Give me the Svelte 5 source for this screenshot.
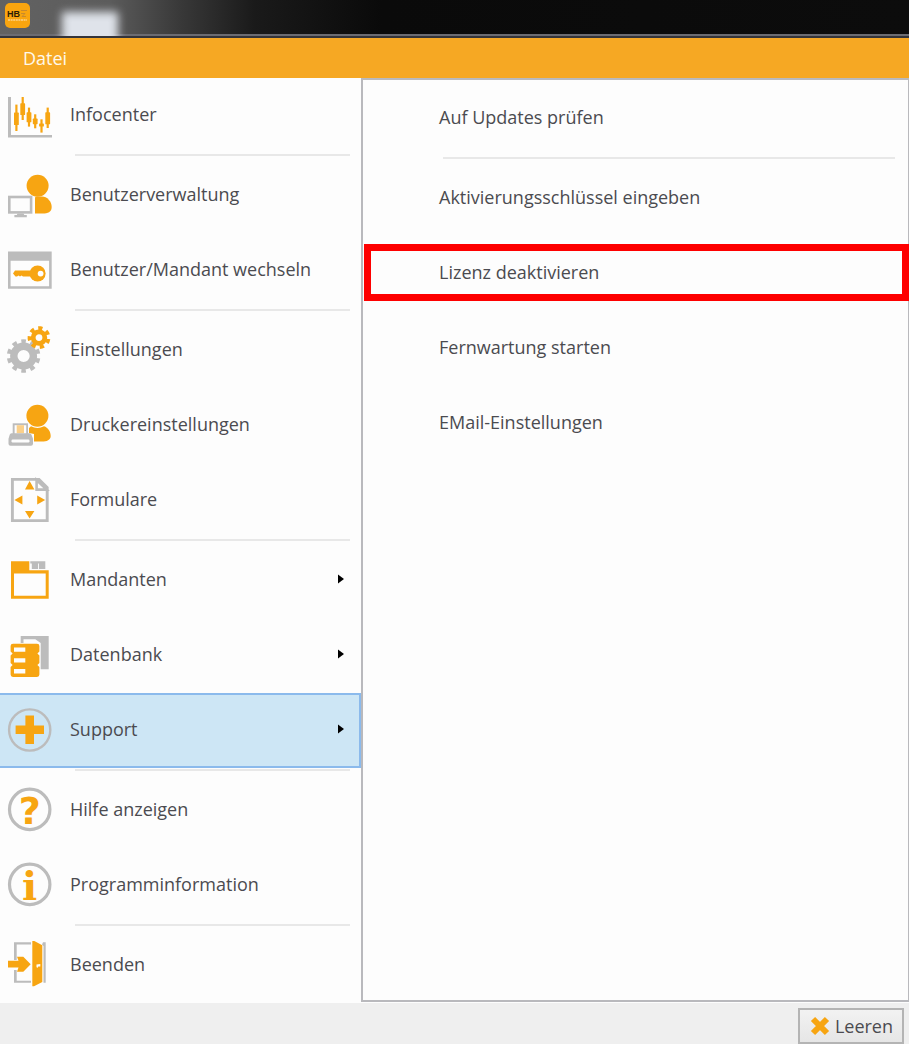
<script>
  const menu = [
    { id: 'infocenter', label: 'Infocenter', line: true },
    { id: 'users', label: 'Benutzerverwaltung' },
    { id: 'switch', label: 'Benutzer/Mandant wechseln', line: true },
    { id: 'settings', label: 'Einstellungen' },
    { id: 'printer', label: 'Druckereinstellungen' },
    { id: 'forms', label: 'Formulare', line: true },
    { id: 'clients', label: 'Mandanten', sub: true },
    { id: 'database', label: 'Datenbank', sub: true },
    { id: 'support', label: 'Support', sub: true, line: true },
    { id: 'help', label: 'Hilfe anzeigen' },
    { id: 'info', label: 'Programminformation', line: true },
    { id: 'exit', label: 'Beenden' }
  ];

  const supportItems = [
    { label: 'Auf Updates prüfen', line: true },
    { label: 'Aktivierungsschlüssel eingeben' },
    { label: 'Lizenz deaktivieren', marked: true },
    { label: 'Fernwartung starten' },
    { label: 'EMail-Einstellungen' }
  ];

  // x, wick top, wick bottom, body top, body bottom
  const candles = [
    [6, 12.6, 39, 20.6, 33],
    [12.3, 5, 28, 11.3, 23],
    [18.6, 15.6, 34.6, 20.3, 30.3],
    [24.8, 22.3, 36.3, 26.6, 32.2],
    [31.1, 27.3, 40.6, 31.4, 34.6],
    [37.3, 15.6, 36, 20.3, 32.3]
  ];

  let active = $state('support');
</script>

{#snippet icon(id)}
  <svg class="icon" viewBox="0 0 44 47" aria-hidden="true">
    {#if id === 'infocenter'}
      <path class="g" d="M0 5h3v38h41v2.6H0z" />
      {#each candles as [x, w1, w2, b1, b2]}
        <rect class="o" x={x + 1.3} y={w1} width="2.2" height={w2 - w1} />
        <rect class="o" {x} y={b1} width="4.8" height={b2 - b1} rx="0.6" />
      {/each}
    {:else if id === 'users'}
      <circle class="o" cx="29.6" cy="13.7" r="11" />
      <path class="o" d="M27 26q0-1.4 1.4-1.4H34c5 0 9.7 5 9.7 10.5c0 5-4 6.5-9 6.5H27z" />
      <rect class="gs" x="1.3" y="25" width="21.8" height="15.4" stroke-width="2.6" />
      <path class="g" d="M9.5 41.5h6l.8 1.6h2.5v2.2H6.4v-2.2h2.4z" />
    {:else if id === 'switch'}
      <path class="g" d="M0 4.6h43.7v37.2H0zM2.6 13.8v25.4h38.5V13.8z" fill-rule="evenodd" />
      <circle class="o" cx="29.6" cy="26.5" r="8" />
      <path class="o" d="M7 23.6h17v6h-9l-1.5-1-1.5 1-1.5-1-1.5 1H7.5L5 26.5z" />
      <circle class="w" cx="32.6" cy="26.6" r="2.9" />
    {:else if id === 'settings'}
      <circle class="gs" cx="15.6" cy="29" r="9.8" stroke-width="7.4" />
      <circle class="gs" cx="15.6" cy="29" r="14.8" stroke-width="4" pathLength="20" stroke-dasharray="1 1" stroke-dashoffset="0.5" transform="rotate(-90 15.6 29)" />
      <circle class="os" cx="31" cy="10.6" r="5.8" stroke-width="4.8" />
      <circle class="os" cx="31" cy="10.6" r="9.4" stroke-width="4" pathLength="14" stroke-dasharray="1 1" transform="rotate(8 31 10.6)" />
    {:else if id === 'printer'}
      <circle class="o" cx="29.4" cy="13.7" r="11" />
      <path class="o" d="M21 26l2-1.8q6.4 3.6 13 0c4 1.3 6.7 5.4 6.7 9.8 0 4-4 5.6-8.7 5.6h-8V32l-5-1z" />
      <path class="g" d="M4.7 21.3H20V32H4.7z" />
      <path class="w" d="M6.6 23.2h11.6V32H6.6z" />
      <path class="pale" d="M8.7 23.2H16v8H8.7z" />
      <path class="g" d="M3.5 31.2h18q1.5 0 2 1.5l1.5 4v5q0 2-2 2H2.5q-2 0-2-2v-5l1.2-4q.4-1.5 1.8-1.5z" />
      <rect class="w" x="3.5" y="37.4" width="18" height="3" rx="1.2" />
    {:else if id === 'forms'}
      <path class="gs" d="M4.4 2.4H31l8.2 8.2v33H4.4z" stroke-width="2.9" />
      <path class="gs" d="M28.6 3v9.6h10z" stroke-width="2.6" />
      <path class="o" d="M21.6 4l4.8 8.5H17zM21.6 41.4L17 34h9.4zM6.4 23l8-4.6v9.2zM37.2 23l-8-4.6v9.2z" />
    {:else if id === 'clients'}
      <path class="o" d="M3 4.3h18.3v9h19.4v28.5H3zM6 16.5v22.3h31.7V16.5z" fill-rule="evenodd" />
      <path class="g" d="M22.3 4.3h15v7.7h-6.4V6.5h-.9V12h-6.2V6.5h-1.5z" />
    {:else if id === 'database'}
      <path class="g" d="M12.7 4h28v33.2h-8V11l-5.4-3.8H15.5V11h-2.8z" />
      <path class="o" d="M5 11.7h24q2.4 0 2.4 2.4v5.4l-2 2 2 2v7.4l-2 2 2 2v7.7q0 2.4-2.4 2.4H5q-2.4 0-2.4-2.4v-7.7l2-2-2-2v-7.4l2-2-2-2v-5.4q0-2.4 2.4-2.4z" />
      <path class="w" d="M6 15.4h11.3v4.4H6zM6 26.2h11.3v4.4H6zM6 37h11.3v4.4H6z" />
    {:else if id === 'support'}
      <circle class="gs" cx="21.7" cy="23" r="20.6" stroke-width="2.4" />
      <path class="o" d="M17.4 8.6H26v10h10V27H26v10h-8.6V27H7.6v-8.4h9.8z" />
    {:else if id === 'help'}
      <circle class="gs" cx="21.7" cy="22.4" r="20.2" stroke-width="3.2" />
      <text class="sign" x="21.7" y="36.6">?</text>
    {:else if id === 'info'}
      <circle class="gs" cx="21.7" cy="22.4" r="20.2" stroke-width="3.2" />
      <text class="sign serif" x="21.7" y="38">i</text>
    {:else if id === 'exit'}
      <path class="g" d="M6 .3h17v2.2H8.7V18H6zM6 28h2.7v10.8H23v2H6zM35 .3h2.7v40.5h-2.2V4L34 2.5z" />
      <path class="o" d="M24.3-1h2l8 4.3V40L26 44.3h-1.7z" />
      <path class="w" d="M28.5 22.5l3.8-.5v2.5h-2l-1 1.5-.8-1z" />
      <path class="o" d="M0 18.7h10.5L9 14.7h6.3l7.4 7.6-7.4 7.4H9l1.5-4.3H0z" />
    {/if}
  </svg>
{/snippet}

<div class="window">
  <header class="titlebar">
    <svg class="logo" viewBox="0 0 25 25" role="img" aria-label="HB">
      <rect width="25" height="25" rx="5" fill="#f9a50f" />
      <text x="2" y="14" font-size="9" font-weight="700" fill="#2c1c05">HB</text>
      <path d="M16 7.5h6M16 10.5h4l-3 3h4" stroke="#c98a2c" fill="none" />
      <path d="M3 17h19" stroke="#fcd28a" stroke-width="1.4" stroke-dasharray="2 .6" />
    </svg>
    <span class="glow"></span>
  </header>

  <nav class="tabs">
    <button class="tab">Datei</button>
  </nav>

  <main>
    <nav class="menu">
      {#each menu as item}
        <button class="item" class:active={item.id === active} onclick={() => (active = item.id)}>
          {@render icon(item.id)}
          <span class="label">{item.label}</span>
          {#if item.sub}
            <svg class="arrow" viewBox="0 0 6 10" aria-hidden="true"><path d="M0 .5L6 5 0 9.5z" /></svg>
          {/if}
        </button>
        {#if item.line}<hr />{/if}
      {/each}
    </nav>

    <section class="panel">
      {#each supportItems as item}
        <button class="item" class:marked={item.marked}>
          <span class="label">{item.label}</span>
        </button>
        {#if item.line}<hr />{/if}
      {/each}
    </section>
  </main>

  <footer>
    <button class="clear">
      <svg viewBox="0 0 20 20" aria-hidden="true">
        <path d="M3 3l14 14M17 3L3 17" stroke="#f7a512" stroke-width="6" />
      </svg>
      Leeren
    </button>
  </footer>
</div>

<style>
  :global(body) {
    margin: 0;
    background: #efefef;
  }

  .window {
    display: flex;
    flex-direction: column;
    min-height: 100vh;
    font-family: 'Open Sans', 'Noto Sans', sans-serif;
    font-size: 18px;
    color: #4b4b50;
  }

  button {
    font: inherit;
    color: inherit;
    border: 0;
    background: none;
    padding: 0;
    text-align: left;
    cursor: pointer;
  }

  .titlebar {
    display: flex;
    align-items: flex-start;
    gap: 32px;
    box-sizing: border-box;
    height: 38px;
    padding: 3px 5px 0;
    overflow: hidden;
    background: linear-gradient(90deg, #626262 0%, #5c5c5c 12%, #383838 20%, #1a1a1a 28%, #0a0a0a 42%, #0c0c0c 100%);
    border-bottom: 2px solid #34343a;
    box-shadow: inset 0 -2px #6c6c72;
  }

  .logo {
    width: 25px;
    height: 25px;
    font-family: 'Liberation Sans', sans-serif;
  }

  .glow {
    width: 56px;
    height: 40px;
    margin-top: 9px;
    background: #dfe3ea;
    filter: blur(4px);
  }

  .tabs {
    display: flex;
    height: 40px;
    background: #f6a823;
  }

  .tab {
    padding: 0 23px;
    color: #fff8ea;
  }

  main {
    display: flex;
    flex: 1;
    background: #fdfdfd;
  }

  .menu {
    flex: 0 0 361px;
  }

  .item {
    display: flex;
    align-items: center;
    box-sizing: border-box;
    width: 100%;
    height: 75px;
  }

  .menu .item {
    gap: 18px;
    padding: 0 17px 0 8px;
  }

  .menu .active {
    background: #cde6f5;
    box-shadow: inset -2px 0 #8bbaec, inset 0 2px #8bbaec, inset 0 -2px #8bbaec;
  }

  .label {
    flex: 1;
    margin-bottom: 3px;
  }

  hr {
    height: 2px;
    margin: 1px 11px 2px 75px;
    border: 0;
    background: #e8e8e8;
  }

  .icon {
    width: 44px;
    height: 47px;
    overflow: visible;
  }

  .arrow {
    width: 6px;
    height: 10px;
    margin-bottom: 3px;
  }

  .o {
    fill: #f7a512;
  }

  .g {
    fill: #bcbcbc;
  }

  .w {
    fill: #fdfdfd;
  }

  .pale {
    fill: #fbd08a;
  }

  .gs {
    fill: none;
    stroke: #bcbcbc;
  }

  .os {
    fill: none;
    stroke: #f7a512;
  }

  .sign {
    fill: #f7a512;
    font-family: 'DejaVu Sans', sans-serif;
    font-size: 38px;
    font-weight: 700;
    text-anchor: middle;
  }

  .serif {
    font-family: 'DejaVu Serif', serif;
    font-size: 40px;
  }

  .panel {
    flex: 1;
    margin-bottom: 1px;
    padding-top: 1px;
    border: 2px solid #b9b9bd;
    border-right-width: 1px;
  }

  .panel .item {
    position: relative;
    padding-left: 76px;
  }

  .panel hr {
    margin: 1px 13px 2px 80px;
  }

  .marked::after {
    content: '';
    position: absolute;
    inset: 8px -1px 10px 1px;
    border: 7px solid #fe0000;
  }

  footer {
    display: flex;
    justify-content: flex-end;
    padding: 5px 5px 0;
    background: #efefef;
  }

  .clear {
    display: flex;
    align-items: center;
    gap: 5px;
    box-sizing: border-box;
    height: 36px;
    padding: 0 9px 0 10px;
    border: 2px solid #b4b4b4;
    background: linear-gradient(#f2f2f2, #e6e6e6);
  }

  .clear svg {
    width: 20px;
    height: 20px;
  }
</style>
